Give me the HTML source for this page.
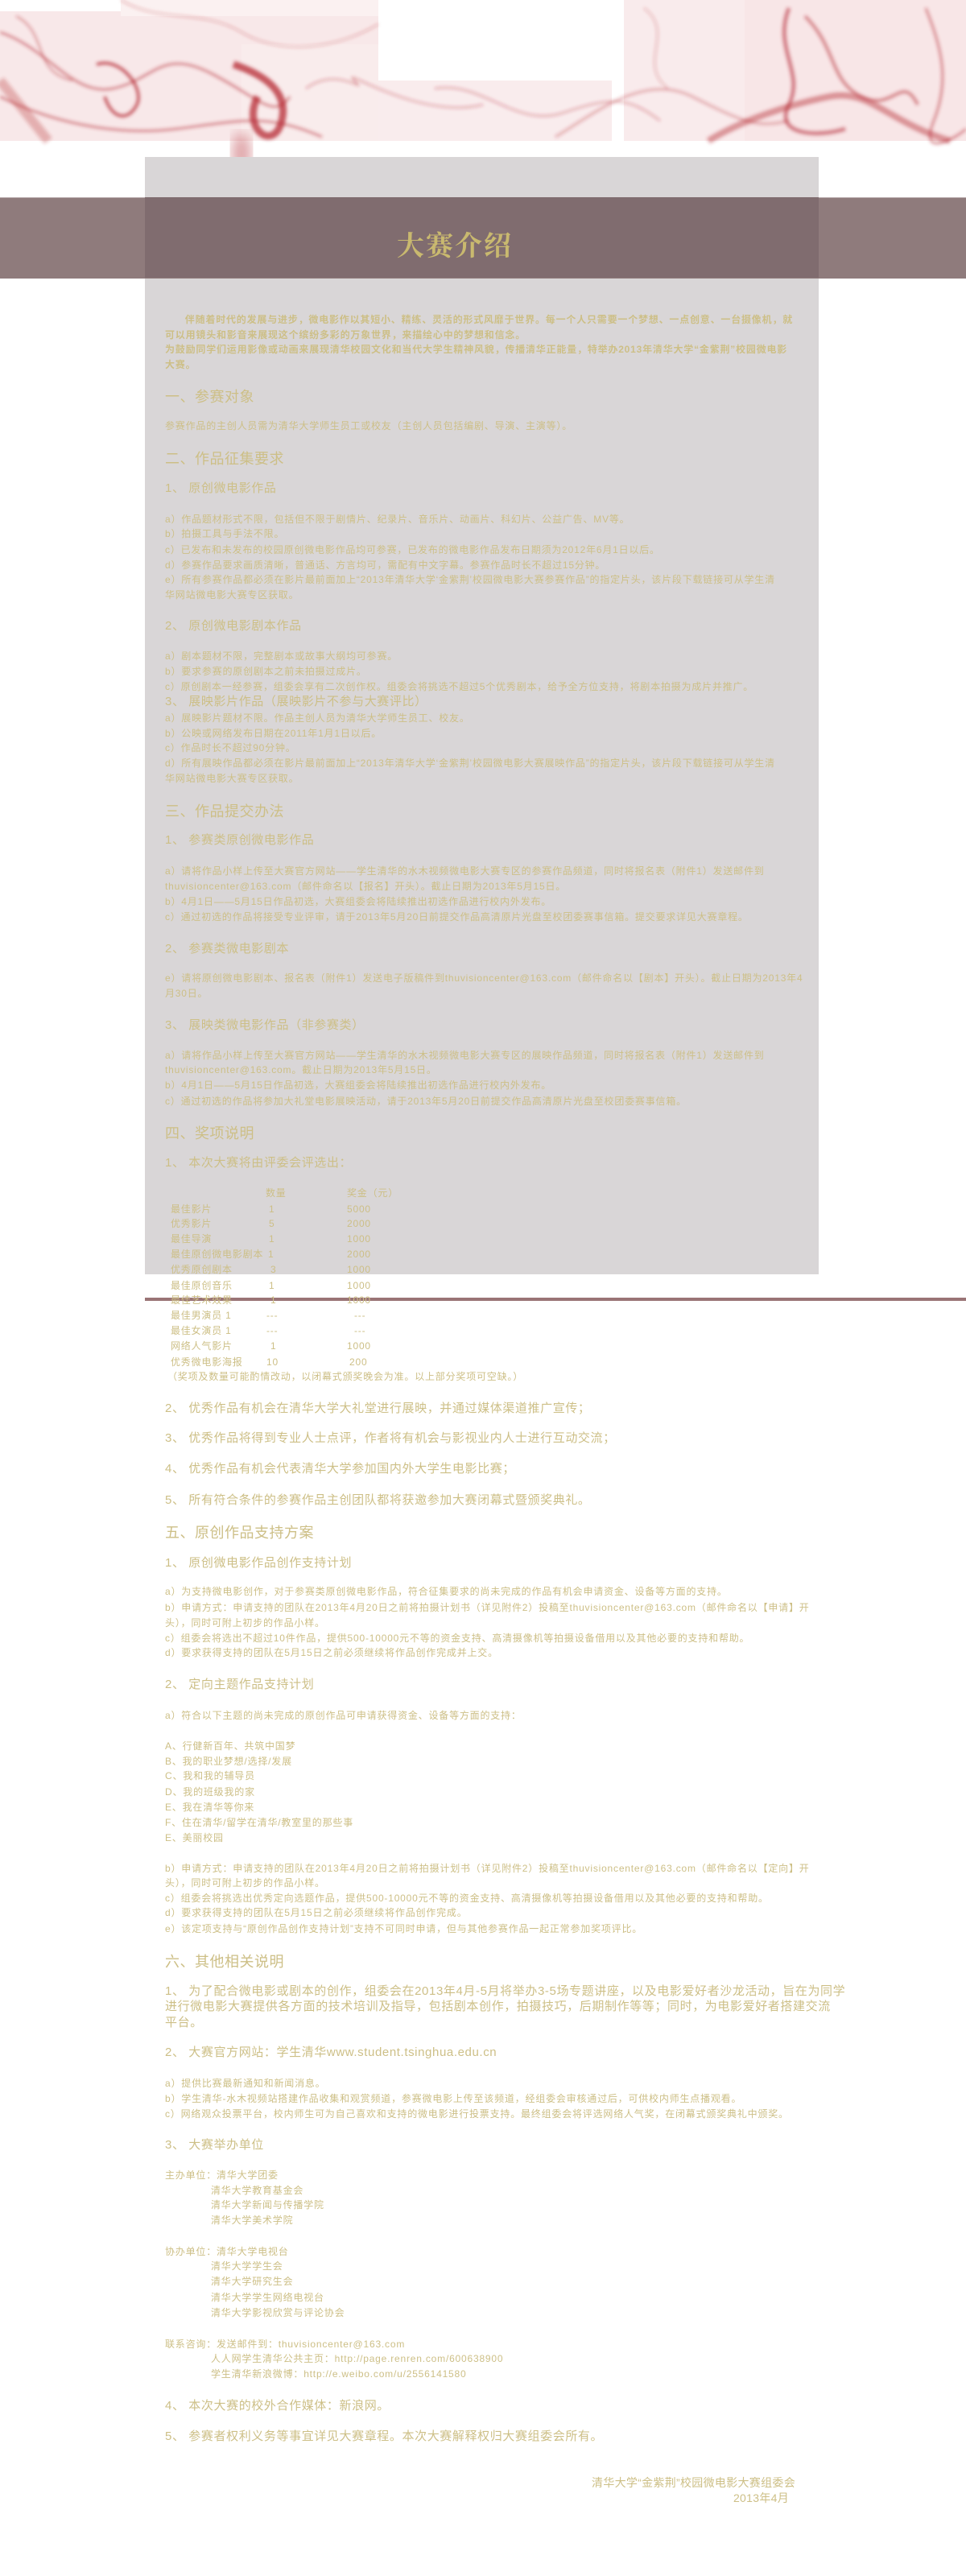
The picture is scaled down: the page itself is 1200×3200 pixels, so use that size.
<!DOCTYPE html>
<html><head><meta charset="utf-8"><style>
html,body{margin:0;padding:0}
body{width:1200px;height:3200px;position:relative;background:#fff;overflow:hidden;font-family:"Liberation Sans","Noto Sans CJK SC",sans-serif;color:#cdbf86}
.l{position:absolute;left:205px;font-size:12px;line-height:18px;white-space:nowrap;transform:translateY(-9px);letter-spacing:0.8px}
.s{font-size:15px;letter-spacing:0.6px}
.h{font-size:18px;letter-spacing:0.5px}
.i{left:262px}
.t{position:absolute;font-size:12px;line-height:18px;transform:translateY(-9px);white-space:nowrap;letter-spacing:0.8px}
</style></head><body>
<svg width="1200" height="230" style="position:absolute;left:0;top:0" viewBox="0 0 1200 230">
<defs>
<filter id="b" x="-20%" y="-20%" width="140%" height="140%"><feGaussianBlur stdDeviation="2"/></filter>
<filter id="b2"><feGaussianBlur stdDeviation="8"/></filter>
</defs>
<rect x="0" y="14" width="470" height="161" fill="#f8e8e9"/>
<rect x="150" y="0" width="320" height="20" fill="#fbf1f1"/>
<rect x="300" y="55" width="170" height="120" fill="#f9ecec"/>
<rect x="470" y="100" width="290" height="75" fill="#f9eced"/>
<rect x="775" y="0" width="150" height="175" fill="#f9ebec"/>
<rect x="925" y="0" width="275" height="175" fill="#f8e6e7"/>
<g fill="none" stroke="#b52a33" filter="url(#b)">
<path d="M0 40 C60 60 90 120 140 110 S200 60 260 90 S340 150 360 120" stroke-width="3" opacity=".5"/>
<path d="M120 80 C150 70 180 110 170 130 S140 150 130 120" stroke-width="4" opacity=".7"/>
<path d="M290 80 C320 90 360 110 350 150 S300 160 320 120" stroke-width="9" opacity=".75"/>
<path d="M0 120 C60 150 140 170 220 160 S330 140 400 170" stroke-width="3" opacity=".5"/>
<path d="M0 100 L60 175" stroke-width="12" opacity=".3"/>
<path d="M20 20 C60 40 40 90 90 100" stroke-width="2" opacity=".5"/>
<path d="M380 110 C420 80 460 120 440 100 S520 150 600 130" stroke-width="2" opacity=".4"/>
<path d="M540 110 C600 100 640 160 700 140 S780 120 820 150" stroke-width="2" opacity=".4"/>
<path d="M690 170 C740 140 800 90 860 120 S940 160 980 150" stroke-width="3" opacity=".35"/>
<path d="M980 10 C960 60 1000 90 980 130 S1020 170 1050 160" stroke-width="5" opacity=".55"/>
<path d="M1000 20 C1040 60 1030 100 1070 120 S1120 90 1140 130" stroke-width="4" opacity=".5"/>
<path d="M1150 10 C1170 60 1180 100 1160 150 S1190 170 1200 160" stroke-width="3" opacity=".5"/>
<path d="M880 175 C920 150 980 130 1030 120 S1100 150 1180 175" stroke-width="8" opacity=".45"/>
<path d="M800 10 C840 40 790 80 830 110" stroke-width="2" opacity=".3"/>
<path d="M150 0 C200 30 250 10 300 40 S420 60 470 30" stroke-width="2" opacity=".3"/>
</g>
<ellipse cx="300" cy="190" rx="12" ry="25" fill="#b8343c" opacity=".45" filter="url(#b2)"/>
</svg>
<div style="position:absolute;left:180px;top:195px;width:837px;height:1388px;background:#d9d6d7"></div>
<div style="position:absolute;left:0;top:245px;width:1200px;height:100px;background:#8f7b7c;border-top:1px solid #b9acad"></div>
<div style="position:absolute;left:180px;top:245px;width:837px;height:100px;background:#806c6f"></div>
<div style="position:absolute;left:180px;top:1612px;width:1020px;height:4px;background:#9a7476"></div>
<div style="position:absolute;left:480px;top:280px;width:170px;text-align:center;font-family:'Noto Serif CJK SC','Liberation Serif',serif;font-weight:bold;font-size:34px;color:#c9b96f;line-height:46px;letter-spacing:2px">大赛介绍</div>

<div class="l" style="top:397px;font-weight:bold;">&nbsp;&nbsp;&nbsp;&nbsp;&nbsp;&nbsp;伴随着时代的发展与进步，微电影作以其短小、精练、灵活的形式风靡于世界。每一个人只需要一个梦想、一点创意、一台摄像机，就</div>
<div class="l" style="top:416px;font-weight:bold">可以用镜头和影音来展现这个缤纷多彩的万象世界，来描绘心中的梦想和信念。</div>
<div class="l" style="top:434px;font-weight:bold">为鼓励同学们运用影像或动画来展现清华校园文化和当代大学生精神风貌，传播清华正能量，特举办2013年清华大学“金紫荆”校园微电影</div>
<div class="l" style="top:453px;font-weight:bold">大赛。</div>
<div class="l h" style="top:493px">一、参赛对象</div>
<div class="l" style="top:529px">参赛作品的主创人员需为清华大学师生员工或校友（主创人员包括编剧、导演、主演等）。</div>
<div class="l h" style="top:570px">二、作品征集要求</div>
<div class="l s" style="top:607px">1、 原创微电影作品</div>
<div class="l" style="top:645px">a）作品题材形式不限，包括但不限于剧情片、纪录片、音乐片、动画片、科幻片、公益广告、MV等。</div>
<div class="l" style="top:663px">b）拍摄工具与手法不限。</div>
<div class="l" style="top:683px">c）已发布和未发布的校园原创微电影作品均可参赛，已发布的微电影作品发布日期须为2012年6月1日以后。</div>
<div class="l" style="top:702px">d）参赛作品要求画质清晰，普通话、方言均可，需配有中文字幕。参赛作品时长不超过15分钟。</div>
<div class="l" style="top:720px">e）所有参赛作品都必须在影片最前面加上“2013年清华大学‘金紫荆’校园微电影大赛参赛作品”的指定片头，该片段下载链接可从学生清</div>
<div class="l" style="top:739px">华网站微电影大赛专区获取。</div>
<div class="l s" style="top:778px">2、 原创微电影剧本作品</div>
<div class="l" style="top:815px">a）剧本题材不限，完整剧本或故事大纲均可参赛。</div>
<div class="l" style="top:834px">b）要求参赛的原创剧本之前未拍摄过成片。</div>
<div class="l" style="top:853px">c）原创剧本一经参赛，组委会享有二次创作权。组委会将挑选不超过5个优秀剧本，给予全方位支持，将剧本拍摄为成片并推广。</div>
<div class="l s" style="top:872px">3、 展映影片作品（展映影片不参与大赛评比）</div>
<div class="l" style="top:892px">a）展映影片题材不限。作品主创人员为清华大学师生员工、校友。</div>
<div class="l" style="top:911px">b）公映或网络发布日期在2011年1月1日以后。</div>
<div class="l" style="top:929px">c）作品时长不超过90分钟。</div>
<div class="l" style="top:948px">d）所有展映作品都必须在影片最前面加上“2013年清华大学‘金紫荆’校园微电影大赛展映作品”的指定片头，该片段下载链接可从学生清</div>
<div class="l" style="top:967px">华网站微电影大赛专区获取。</div>
<div class="l h" style="top:1008px">三、作品提交办法</div>
<div class="l s" style="top:1044px">1、 参赛类原创微电影作品</div>
<div class="l" style="top:1082px">a）请将作品小样上传至大赛官方网站——学生清华的水木视频微电影大赛专区的参赛作品频道，同时将报名表（附件1）发送邮件到</div>
<div class="l" style="top:1101px">thuvisioncenter@163.com（邮件命名以【报名】开头）。截止日期为2013年5月15日。</div>
<div class="l" style="top:1120px">b）4月1日——5月15日作品初选，大赛组委会将陆续推出初选作品进行校内外发布。</div>
<div class="l" style="top:1139px">c）通过初选的作品将接受专业评审，请于2013年5月20日前提交作品高清原片光盘至校团委赛事信箱。提交要求详见大赛章程。</div>
<div class="l s" style="top:1179px">2、 参赛类微电影剧本</div>
<div class="l" style="top:1215px">e）请将原创微电影剧本、报名表（附件1）发送电子版稿件到thuvisioncenter@163.com（邮件命名以【剧本】开头）。截止日期为2013年4</div>
<div class="l" style="top:1234px">月30日。</div>
<div class="l s" style="top:1274px">3、 展映类微电影作品（非参赛类）</div>
<div class="l" style="top:1311px">a）请将作品小样上传至大赛官方网站——学生清华的水木视频微电影大赛专区的展映作品频道，同时将报名表（附件1）发送邮件到</div>
<div class="l" style="top:1329px">thuvisioncenter@163.com。截止日期为2013年5月15日。</div>
<div class="l" style="top:1348px">b）4月1日——5月15日作品初选，大赛组委会将陆续推出初选作品进行校内外发布。</div>
<div class="l" style="top:1368px">c）通过初选的作品将参加大礼堂电影展映活动，请于2013年5月20日前提交作品高清原片光盘至校团委赛事信箱。</div>
<div class="l h" style="top:1408px">四、奖项说明</div>
<div class="l s" style="top:1445px">1、 本次大赛将由评委会评选出：</div>
<div class="t" style="left:330px;top:1482px">数量</div><div class="t" style="left:431px;top:1482px">奖金（元）</div>
<div class="t" style="left:212px;top:1502px">最佳影片</div><div class="t" style="left:334px;top:1502px">1</div><div class="t" style="left:431px;top:1502px">5000</div>
<div class="t" style="left:212px;top:1520px">优秀影片</div><div class="t" style="left:334px;top:1520px">5</div><div class="t" style="left:431px;top:1520px">2000</div>
<div class="t" style="left:212px;top:1539px">最佳导演</div><div class="t" style="left:334px;top:1539px">1</div><div class="t" style="left:431px;top:1539px">1000</div>
<div class="t" style="left:212px;top:1558px">最佳原创微电影剧本</div><div class="t" style="left:333px;top:1558px">1</div><div class="t" style="left:431px;top:1558px">2000</div>
<div class="t" style="left:212px;top:1577px">优秀原创剧本</div><div class="t" style="left:336px;top:1577px">3</div><div class="t" style="left:431px;top:1577px">1000</div>
<div class="t" style="left:212px;top:1597px">最佳原创音乐</div><div class="t" style="left:334px;top:1597px">1</div><div class="t" style="left:431px;top:1597px">1000</div>
<div class="t" style="left:212px;top:1615px">最佳艺术效果</div><div class="t" style="left:336px;top:1615px">1</div><div class="t" style="left:431px;top:1615px">1000</div>
<div class="t" style="left:212px;top:1634px">最佳男演员 1</div><div class="t" style="left:331px;top:1634px">---</div><div class="t" style="left:440px;top:1634px">---</div>
<div class="t" style="left:212px;top:1653px">最佳女演员 1</div><div class="t" style="left:331px;top:1653px">---</div><div class="t" style="left:440px;top:1653px">---</div>
<div class="t" style="left:212px;top:1672px">网络人气影片</div><div class="t" style="left:336px;top:1672px">1</div><div class="t" style="left:431px;top:1672px">1000</div>
<div class="t" style="left:212px;top:1692px">优秀微电影海报</div><div class="t" style="left:331px;top:1692px">10</div><div class="t" style="left:434px;top:1692px">200</div>
<div class="t" style="left:208px;top:1710px">（奖项及数量可能酌情改动，以闭幕式颁奖晚会为准。以上部分奖项可空缺。）</div>
<div class="l s" style="top:1750px">2、 优秀作品有机会在清华大学大礼堂进行展映，并通过媒体渠道推广宣传；</div>
<div class="l s" style="top:1787px">3、 优秀作品将得到专业人士点评，作者将有机会与影视业内人士进行互动交流；</div>
<div class="l s" style="top:1825px">4、 优秀作品有机会代表清华大学参加国内外大学生电影比赛；</div>
<div class="l s" style="top:1864px">5、 所有符合条件的参赛作品主创团队都将获邀参加大赛闭幕式暨颁奖典礼。</div>
<div class="l h" style="top:1904px">五、原创作品支持方案</div>
<div class="l s" style="top:1942px">1、 原创微电影作品创作支持计划</div>
<div class="l" style="top:1977px">a）为支持微电影创作，对于参赛类原创微电影作品，符合征集要求的尚未完成的作品有机会申请资金、设备等方面的支持。</div>
<div class="l" style="top:1997px">b）申请方式：申请支持的团队在2013年4月20日之前将拍摄计划书（详见附件2）投稿至thuvisioncenter@163.com（邮件命名以【申请】开</div>
<div class="l" style="top:2016px">头），同时可附上初步的作品小样。</div>
<div class="l" style="top:2035px">c）组委会将选出不超过10件作品，提供500-10000元不等的资金支持、高清摄像机等拍摄设备借用以及其他必要的支持和帮助。</div>
<div class="l" style="top:2053px">d）要求获得支持的团队在5月15日之前必须继续将作品创作完成并上交。</div>
<div class="l s" style="top:2093px">2、 定向主题作品支持计划</div>
<div class="l" style="top:2131px">a）符合以下主题的尚未完成的原创作品可申请获得资金、设备等方面的支持：</div>
<div class="l" style="top:2169px">A、行健新百年、共筑中国梦</div>
<div class="l" style="top:2188px">B、我的职业梦想/选择/发展</div>
<div class="l" style="top:2206px">C、我和我的辅导员</div>
<div class="l" style="top:2226px">D、我的班级我的家</div>
<div class="l" style="top:2245px">E、我在清华等你来</div>
<div class="l" style="top:2264px">F、住在清华/留学在清华/教室里的那些事</div>
<div class="l" style="top:2283px">E、美丽校园</div>
<div class="l" style="top:2321px">b）申请方式：申请支持的团队在2013年4月20日之前将拍摄计划书（详见附件2）投稿至thuvisioncenter@163.com（邮件命名以【定向】开</div>
<div class="l" style="top:2339px">头），同时可附上初步的作品小样。</div>
<div class="l" style="top:2358px">c）组委会将挑选出优秀定向选题作品，提供500-10000元不等的资金支持、高清摄像机等拍摄设备借用以及其他必要的支持和帮助。</div>
<div class="l" style="top:2376px">d）要求获得支持的团队在5月15日之前必须继续将作品创作完成。</div>
<div class="l" style="top:2396px">e）该定项支持与“原创作品创作支持计划”支持不可同时申请，但与其他参赛作品一起正常参加奖项评比。</div>
<div class="l h" style="top:2437px">六、其他相关说明</div>
<div class="l s" style="top:2474px">1、 为了配合微电影或剧本的创作，组委会在2013年4月-5月将举办3-5场专题讲座，以及电影爱好者沙龙活动，旨在为同学</div>
<div class="l s" style="top:2493px">进行微电影大赛提供各方面的技术培训及指导，包括剧本创作，拍摄技巧，后期制作等等；同时，为电影爱好者搭建交流</div>
<div class="l s" style="top:2513px">平台。</div>
<div class="l s" style="top:2550px">2、 大赛官方网站：学生清华www.student.tsinghua.edu.cn</div>
<div class="l" style="top:2588px">a）提供比赛最新通知和新闻消息。</div>
<div class="l" style="top:2607px">b）学生清华-水木视频站搭建作品收集和观赏频道，参赛微电影上传至该频道，经组委会审核通过后，可供校内师生点播观看。</div>
<div class="l" style="top:2626px">c）网络观众投票平台，校内师生可为自己喜欢和支持的微电影进行投票支持。最终组委会将评选网络人气奖，在闭幕式颁奖典礼中颁奖。</div>
<div class="l s" style="top:2665px">3、 大赛举办单位</div>
<div class="l" style="top:2702px">主办单位：清华大学团委</div>
<div class="l i" style="top:2721px">清华大学教育基金会</div>
<div class="l i" style="top:2739px">清华大学新闻与传播学院</div>
<div class="l i" style="top:2758px">清华大学美术学院</div>
<div class="l" style="top:2797px">协办单位：清华大学电视台</div>
<div class="l i" style="top:2815px">清华大学学生会</div>
<div class="l i" style="top:2834px">清华大学研究生会</div>
<div class="l i" style="top:2854px">清华大学学生网络电视台</div>
<div class="l i" style="top:2873px">清华大学影视欣赏与评论协会</div>
<div class="l" style="top:2912px">联系咨询：发送邮件到：thuvisioncenter@163.com</div>
<div class="l i" style="top:2930px">人人网学生清华公共主页：http://page.renren.com/600638900</div>
<div class="l i" style="top:2949px">学生清华新浪微博：http://e.weibo.com/u/2556141580</div>
<div class="l s" style="top:2989px">4、 本次大赛的校外合作媒体：新浪网。</div>
<div class="l s" style="top:3027px">5、 参赛者权利义务等事宜详见大赛章程。本次大赛解释权归大赛组委会所有。</div>
<div class="t" style="left:600px;width:388px;text-align:right;top:3084px;font-size:14px;letter-spacing:0.3px">清华大学“金紫荆”校园微电影大赛组委会</div>
<div class="t" style="left:600px;width:380px;text-align:right;top:3103px;font-size:14px;letter-spacing:0.3px">2013年4月</div>
</body></html>
